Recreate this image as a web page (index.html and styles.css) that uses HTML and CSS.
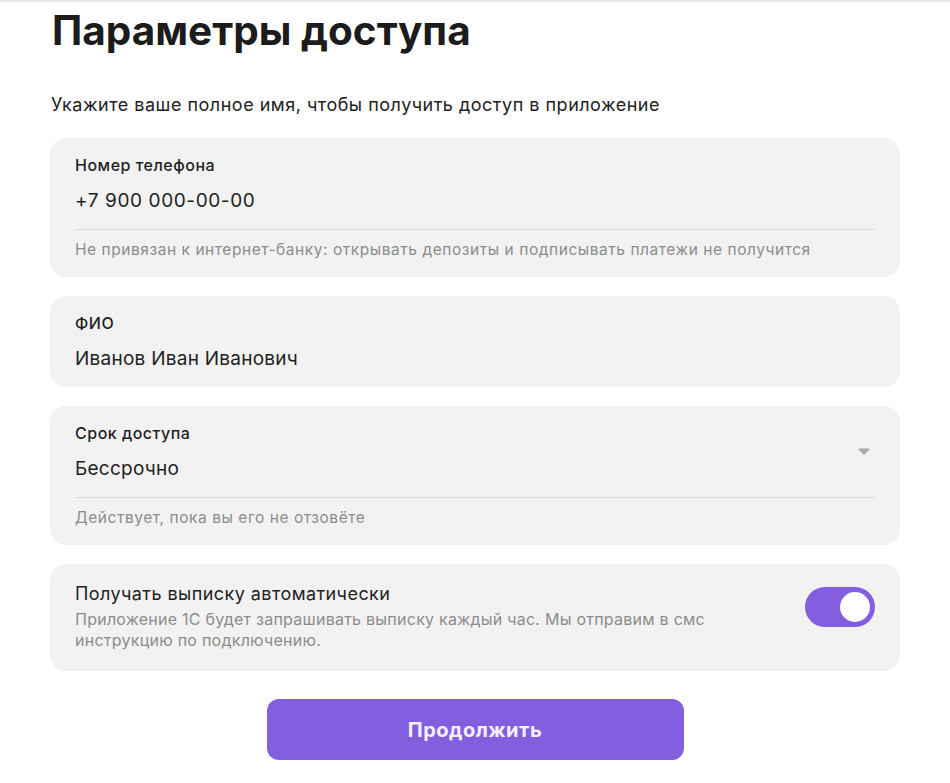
FILE: index.html
```html
<!DOCTYPE html>
<html lang="ru">
<head>
<meta charset="utf-8">
<title>Параметры доступа</title>
<link rel="stylesheet" href="styles.css">
</head>
<body>
<main class="page">
  <h1 class="title">Параметры доступа</h1>
  <p class="subtitle">Укажите ваше полное имя, чтобы получить доступ в приложение</p>

  <div class="cards">
    <section class="card">
      <div class="field field--divided">
        <div class="field-main">
          <div class="label">Номер телефона</div>
          <div class="value value--digits">+7 900 000-00-00</div>
        </div>
      </div>
      <div class="hint">Не привязан к интернет-банку: открывать депозиты и подписывать платежи не получится</div>
    </section>

    <section class="card card--plain">
      <div class="field">
        <div class="field-main">
          <div class="label">ФИО</div>
          <div class="value">Иванов Иван Иванович</div>
        </div>
      </div>
    </section>

    <section class="card">
      <div class="field field--divided">
        <div class="field-main">
          <div class="label">Срок доступа</div>
          <div class="value">Бессрочно</div>
        </div>
        <svg class="chevron" width="12" height="7" viewBox="0 0 12 7" aria-hidden="true">
          <path d="M1.2 0.5h9.6a0.8 0.8 0 0 1 0.6 1.3l-4.8 4.6a0.8 0.8 0 0 1-1.2 0L0.6 1.8a0.8 0.8 0 0 1 0.6-1.3z" fill="#ababab"/>
        </svg>
      </div>
      <div class="hint">Действует, пока вы его не отзовёте</div>
    </section>

    <section class="card card--switch">
      <div class="switch-text">
        <div class="switch-title">Получать выписку автоматически</div>
        <div class="switch-desc">Приложение 1С будет запрашивать выписку каждый час. Мы отправим в смс инструкцию по подключению.</div>
      </div>
      <div class="toggle" role="switch" aria-checked="true"><span class="knob"></span></div>
    </section>
  </div>

  <div class="actions">
    <button class="btn" type="button">Продолжить</button>
  </div>
</main>
</body>
</html>
```

FILE: styles.css
```css
* { box-sizing: border-box; }

html, body {
  margin: 0;
  padding: 0;
  background: #ffffff;
}

body {
  font-family: Inter, "Noto Sans", "DejaVu Sans", sans-serif;
  color: #1f1f1f;
  border-top: 2px solid #e6e6e6;
}

.page {
  padding: 0 50px;
}

.title {
  margin: 5px 0 0 2px;
  font-size: 40.5px;
  line-height: 48px;
  font-weight: 700;
  color: #1c1c1c;
}

.subtitle {
  margin: 38px 0 0 1px;
  font-size: 18px;
  line-height: 24px;
  letter-spacing: 0.5px;
  color: #222;
}

.cards {
  margin-top: 21px;
  display: flex;
  flex-direction: column;
  gap: 19px;
}

.card {
  background: #f2f2f2;
  border-radius: 16px;
  padding: 16px 25px 17px;
}

.card--plain {
  padding-bottom: 14px;
}

.field {
  display: flex;
  align-items: center;
}

.field--divided {
  padding-bottom: 14px;
  border-bottom: 1px solid #dcdcdc;
}

.field-main {
  flex: 1;
}

.label {
  font-size: 16px;
  line-height: 22px;
  font-weight: 500;
  letter-spacing: 0.5px;
  color: #1f1f1f;
}

.value {
  margin-top: 11px;
  font-size: 19px;
  line-height: 28px;
  letter-spacing: 0.25px;
  color: #222;
}

.value--digits {
  letter-spacing: 0.6px;
}

.chevron {
  margin-right: 5px;
  margin-top: -3px;
  flex: none;
}

.hint {
  margin-top: 10px;
  font-size: 15.5px;
  line-height: 20px;
  letter-spacing: 0.55px;
  color: #8c8c8c;
}

.card--switch {
  display: flex;
  align-items: flex-start;
  gap: 24px;
  padding: 18px 25px 20px;
}

.switch-text {
  flex: 1;
}

.switch-title {
  font-size: 18px;
  line-height: 24px;
  letter-spacing: 0.43px;
  color: #222;
}

.switch-desc {
  margin-top: 3px;
  font-size: 16px;
  line-height: 21px;
  letter-spacing: 0.25px;
  color: #8c8c8c;
}

.toggle {
  flex: none;
  margin-top: 5px;
  width: 70px;
  height: 40px;
  border-radius: 20px;
  background: #835fe0;
  display: flex;
  align-items: center;
  justify-content: flex-end;
  padding: 0 5px;
}

.knob {
  width: 30px;
  height: 30px;
  border-radius: 50%;
  background: #ffffff;
}

.actions {
  display: flex;
  justify-content: center;
  margin-top: 28px;
}

.btn {
  width: 417px;
  height: 61px;
  border: none;
  border-radius: 12px;
  background: #835fe0;
  color: #f4f1fd;
  font-family: inherit;
  font-size: 20px;
  font-weight: 700;
  letter-spacing: 0.5px;
  cursor: pointer;
}
```
